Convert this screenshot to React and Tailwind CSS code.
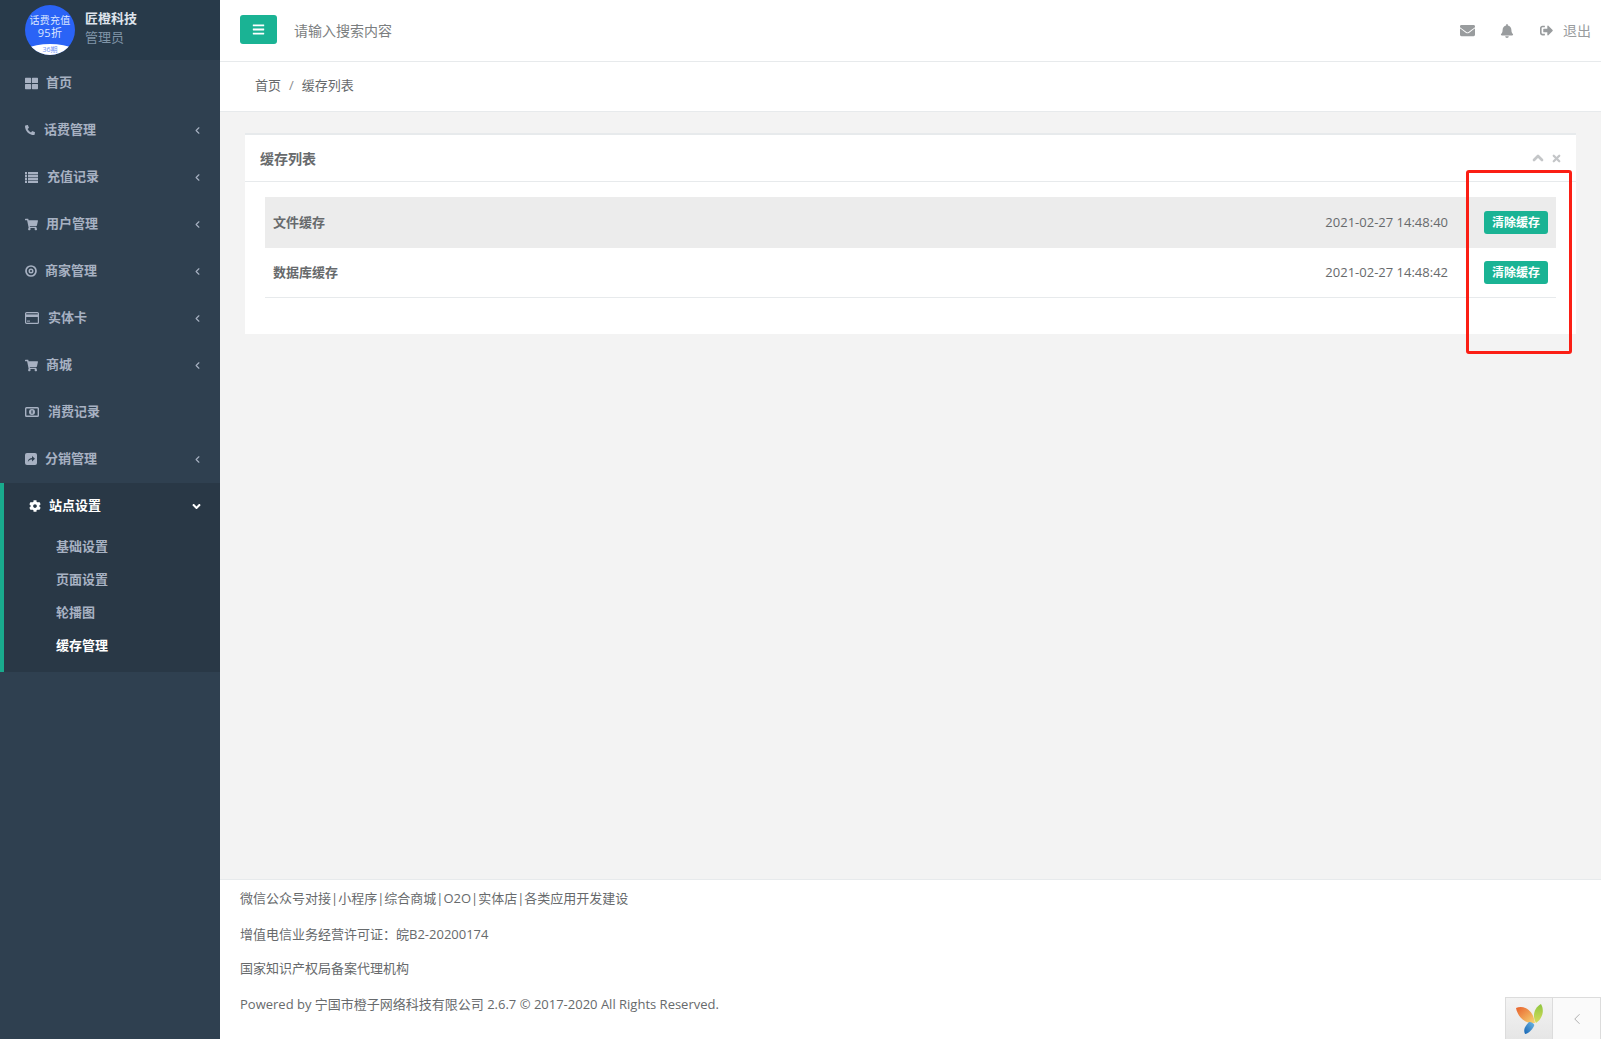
import React from "react";
import { FaThLarge, FaPhoneAlt, FaShoppingCart, FaCog, FaAngleDown, FaBars, FaEnvelope, FaBell, FaSignOutAlt } from "react-icons/fa";
import { ChevronLeft, ChevronUp, X } from "lucide-react";

function ListIcon() {
  return (
    <svg width="13" height="11" viewBox="0 0 13 11" fill="currentColor">
      <rect x="0" y="0" width="2" height="2.4" /><rect x="3" y="0" width="10" height="2.4" />
      <rect x="0" y="3" width="2" height="2.4" /><rect x="3" y="3" width="10" height="2.4" />
      <rect x="0" y="6" width="2" height="2.4" /><rect x="3" y="6" width="10" height="2.4" />
      <rect x="0" y="9" width="2" height="2" /><rect x="3" y="9" width="10" height="2" />
    </svg>
  );
}
function CompassIcon() {
  return (
    <svg width="12" height="12" viewBox="0 0 12 12" fill="none" stroke="currentColor">
      <circle cx="6" cy="6" r="5" strokeWidth="1.7" />
      <circle cx="6" cy="6" r="1.8" strokeWidth="1.4" />
    </svg>
  );
}
function CardIcon() {
  return (
    <svg width="14" height="12" viewBox="0 0 14 12">
      <rect x="0.6" y="0.6" width="12.8" height="10.8" rx="1" fill="none" stroke="currentColor" strokeWidth="1.2" />
      <rect x="1" y="2.4" width="12" height="2.6" fill="currentColor" />
      <rect x="2" y="8.6" width="3" height="1" fill="currentColor" />
    </svg>
  );
}
function MoneyIcon() {
  return (
    <svg width="14" height="10" viewBox="0 0 14 10">
      <rect x="0.7" y="0.7" width="12.6" height="8.6" rx="0.8" fill="none" stroke="currentColor" strokeWidth="1.4" />
      <circle cx="7" cy="5" r="3" fill="currentColor" />
      <rect x="6.4" y="3.4" width="1.2" height="3.2" fill="#2f4050" />
    </svg>
  );
}
function ShareIcon() {
  return (
    <svg width="12" height="12" viewBox="0 0 12 12">
      <rect width="12" height="12" rx="2" fill="currentColor" />
      <path d="M2.8 9 C3 6 5 5 7 5 L7 3 L10 5.8 L7 8.5 L7 6.6 C5.5 6.6 4 7 2.8 9 Z" fill="#2f4050" />
    </svg>
  );
}

const nav = [
  { label: "首页", icon: <FaThLarge size={13} />, box: "w-[21px]" },
  { label: "话费管理", icon: <FaPhoneAlt size={10} />, box: "w-[19px]", arrow: true },
  { label: "充值记录", icon: <ListIcon />, box: "w-[22px]", arrow: true },
  { label: "用户管理", icon: <FaShoppingCart size={13} />, box: "w-[21px]", arrow: true },
  { label: "商家管理", icon: <CompassIcon />, box: "w-[20px]", arrow: true },
  { label: "实体卡", icon: <CardIcon />, box: "w-[23px]", arrow: true },
  { label: "商城", icon: <FaShoppingCart size={13} />, box: "w-[21px]", arrow: true },
  { label: "消费记录", icon: <MoneyIcon />, box: "w-[23px]" },
  { label: "分销管理", icon: <ShareIcon />, box: "w-[20px]", arrow: true },
];

const rows = [
  { name: "文件缓存", time: "2021-02-27 14:48:40", shade: true },
  { name: "数据库缓存", time: "2021-02-27 14:48:42" },
];

function YiiLogo() {
  return (
    <svg width="28" height="30" viewBox="0 0 28 30">
      <defs>
        <linearGradient id="yo" x1="0" y1="0" x2="1" y2="1">
          <stop offset="0" stopColor="#e8602c" />
          <stop offset="1" stopColor="#f7d774" />
        </linearGradient>
        <linearGradient id="yg" x1="0" y1="0" x2="0" y2="1">
          <stop offset="0" stopColor="#8ec63f" />
          <stop offset="1" stopColor="#d6dc5c" />
        </linearGradient>
        <linearGradient id="yb" x1="1" y1="0" x2="0" y2="1">
          <stop offset="0" stopColor="#6fb7e3" />
          <stop offset="1" stopColor="#1464b4" />
        </linearGradient>
      </defs>
      <path d="M1 4 C8 1 18 5 20 19 C11 20 3 14 1 4 Z" fill="url(#yo)" />
      <path d="M26 0 C30 7 27 15 21 19 C17 12 19 4 26 0 Z" fill="url(#yg)" />
      <path d="M14 18 C17 18 20 20 19 22 C17 26 13 30 10 30 C8 26 10 22 14 18 Z" fill="url(#yb)" />
    </svg>
  );
}

export default function App() {
  return (
    <div className="relative flex h-[1039px] w-full overflow-hidden bg-[#f3f3f3] text-[13px] text-[#676a6c] [font-family:'Open_Sans','Noto_Sans_CJK_SC',sans-serif]">
      <aside className="flex w-[220px] shrink-0 flex-col bg-[#2f4050]">
        <div className="flex h-[60px] shrink-0 items-center bg-[#283a4a] pl-[25px]">
          <div className="relative flex h-[50px] w-[50px] flex-col items-center overflow-hidden rounded-full bg-[#2a63f6] pt-[9px] text-[#dbe6ff]">
            <span className="text-[10px] leading-[12px] tracking-[0.2px] whitespace-nowrap">话费充值</span>
            <span className="text-[11px] leading-[13px] tracking-[0.3px] whitespace-nowrap">95折</span>
            <span className="absolute top-[39px] left-[-10px] flex h-[30px] w-[70px] justify-center rounded-[50%] bg-white pt-[1px] text-[7px] leading-[10px] text-[#6f95f5]">36期</span>
          </div>
          <div className="ml-[10px] flex flex-col pb-[4px]">
            <span className="text-[13px] leading-[19px] font-bold text-[#dfe4ed]">匠橙科技</span>
            <span className="text-[13px] leading-[19px] text-[#8095a8]">管理员</span>
          </div>
        </div>
        <nav className="flex flex-col">
          {nav.map(({ label, icon, box, arrow }) => (
            <div key={label} className="flex h-[47px] items-center pr-[17px] pb-[1px] pl-[25px] font-semibold text-[#a7b1c2]">
              <span className={`${box} flex shrink-0 items-center`}>{icon}</span>
              <span className="flex-1">{label}</span>
              {arrow && <ChevronLeft size={11} strokeWidth={2.5} />}
            </div>
          ))}
          <div className="flex h-[189px] flex-col border-l-4 border-[#19aa8d] bg-[#293846]">
            <div className="flex h-[47px] shrink-0 items-center pr-[17px] pb-[1px] pl-[25px] font-semibold text-white">
              <span className="flex w-[20px] shrink-0 items-center">
                <FaCog size={12} />
              </span>
              <span className="flex-1">站点设置</span>
              <FaAngleDown size={13} />
            </div>
            {["基础设置", "页面设置", "轮播图", "缓存管理"].map((t) => (
              <div key={t} className={`h-[33px] pl-[52px] leading-[33px] font-semibold ${t === "缓存管理" ? "text-white" : "text-[#a7b1c2]"}`}>
                {t}
              </div>
            ))}
          </div>
        </nav>
      </aside>

      <div className="flex min-w-0 flex-1 flex-col">
        <header className="flex h-[62px] shrink-0 items-center border-b border-[#e7eaec] bg-white pr-[10px] pl-[20px]">
          <button className="mb-[3px] flex h-[29px] w-[37px] items-center justify-center rounded-[3px] bg-[#1ab394] text-white">
            <FaBars size={13} />
          </button>
          <span className="ml-[17px] text-[14px] text-[#7b7e80]">请输入搜索内容</span>
          <div className="ml-auto flex items-center text-[#999c9e]">
            <FaEnvelope size={15} />
            <span className="ml-[25px]"><FaBell size={14} /></span>
            <span className="ml-[26px]"><FaSignOutAlt size={13} /></span>
            <span className="ml-[10px] text-[14px]">退出</span>
          </div>
        </header>
        <div className="flex h-[50px] shrink-0 items-center border-b border-[#e7eaec] bg-white pb-[1px] pl-[35px]">
          <span>首页</span>
          <span className="mx-[8px] text-[#8a8c8e]">/</span>
          <span>缓存列表</span>
        </div>

        <main className="flex-1 px-[25px] pt-[21px]">
          <section className="h-[201px] border-t-2 border-[#e7eaec] bg-white">
            <div className="flex h-[47px] items-center justify-between border-b border-[#e7eaec] pr-[14px] pl-[15px]">
              <span className="text-[14px] font-semibold">缓存列表</span>
              <div className="flex items-center gap-[5px] text-[#c4c6c8]">
                <ChevronUp size={16} strokeWidth={4} />
                <X size={11} strokeWidth={5} />
              </div>
            </div>
            <div className="px-[20px] pt-[15px]">
              {rows.map((r) => (
                <div key={r.name} className={`flex items-center px-[8px] ${r.shade ? "h-[51px] bg-[#ececec]" : "h-[50px] border-b border-[#e7eaec]"}`}>
                  <span className="flex-1 font-semibold">{r.name}</span>
                  <span>{r.time}</span>
                  <button className="ml-[36px] h-[23px] w-[64px] rounded-[3px] bg-[#1ab394] text-[12px] font-bold text-white">清除缓存</button>
                </div>
              ))}
            </div>
          </section>
        </main>

        <footer className="h-[160px] shrink-0 border-t border-[#e7eaec] bg-white pt-[9px] pl-[20px]">
          <p className="mb-[17px] leading-[18.5px]">微信公众号对接|小程序|综合商城|O2O|实体店|各类应用开发建设</p>
          <p className="mb-[16px] leading-[18.5px]">增值电信业务经营许可证：皖B2-20200174</p>
          <p className="mb-[17px] leading-[18.5px]">国家知识产权局备案代理机构</p>
          <p className="leading-[18.5px]">Powered by 宁国市橙子网络科技有限公司 2.6.7 © 2017-2020 All Rights Reserved.</p>
        </footer>
      </div>

      <div className="absolute top-[170px] left-[1466px] h-[184px] w-[106px] rounded-[3px] border-[3px] border-[#fb1e14]" />

      <div className="absolute right-0 bottom-0 flex h-[42px] w-[96px] border border-b-0 border-[#dcdcdc] bg-[#fafafa]">
        <div className="flex w-[47px] items-center justify-center border-r border-[#dcdcdc] bg-gradient-to-b from-[#f3f3f3] to-[#e6e6e6]">
          <YiiLogo />
        </div>
        <div className="flex flex-1 items-center justify-center text-[#a8a8a8]">
          <ChevronLeft size={18} strokeWidth={1.2} />
        </div>
      </div>
    </div>
  );
}
